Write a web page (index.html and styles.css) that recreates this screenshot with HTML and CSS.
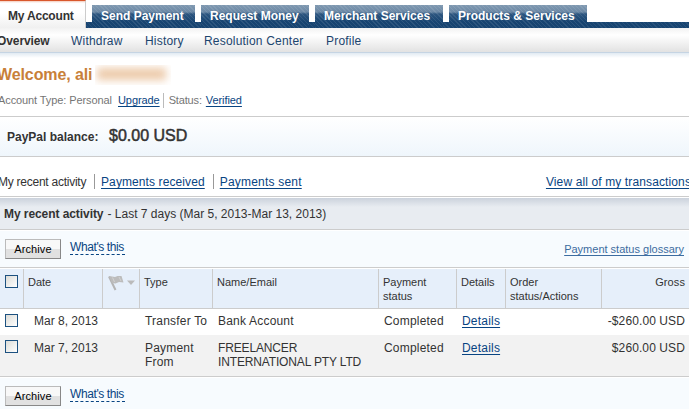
FILE: index.html
```html
<!DOCTYPE html>
<html lang="en">
<head>
    <meta charset="UTF-8">
    <title>My Account - PayPal</title>
    <link rel="stylesheet" href="styles.css">
</head>
<body>
    <div class="tabs">
        <a class="tab active">My Account</a>
        <a class="tab send">Send Payment</a>
        <a class="tab request">Request Money</a>
        <a class="tab merchant">Merchant Services</a>
        <a class="tab products">Products &amp; Services</a>
    </div>
    <div class="subnav">
        <a class="current">Overview</a>
        <a class="withdraw">Withdraw</a>
        <a class="history">History</a>
        <a class="resolution">Resolution Center</a>
        <a class="profile">Profile</a>
    </div>

    <div class="welcome">
        <h1>Welcome, ali</h1>
        <span class="surname"><i></i></span>
    </div>
    <div class="account">
        <span class="type">Account Type: Personal</span>
        <a href="#">Upgrade</a>
        <span class="status">Status:</span>
        <a href="#">Verified</a>
    </div>

    <div class="balance">
        <b class="label">PayPal balance:</b>
        <b class="amount">$0.00 USD</b>
    </div>

    <div class="filters">
        <span class="selected">My recent activity</span>
        <span class="filter"><a href="#">Payments received</a></span>
        <span class="filter sent"><a href="#">Payments sent</a></span>
        <a class="all" href="#">View all of my transactions</a>
    </div>

    <div class="heading"><b>My recent activity</b><span>- Last 7 days (Mar 5, 2013-Mar 13, 2013)</span></div>

    <div class="actions">
        <button type="button">Archive</button>
        <a class="hint">What's this</a>
        <a class="glossary" href="#">Payment status glossary</a>
    </div>

    <table class="activity">
        <colgroup>
            <col class="c-check"><col class="c-date"><col class="c-flag"><col class="c-type"><col class="c-name"><col class="c-status"><col class="c-details"><col class="c-order"><col class="c-gross">
        </colgroup>
        <thead>
            <tr>
                <th class="check"><span class="box"></span></th>
                <th>Date</th>
                <th class="flag">
                    <svg width="29" height="17" viewBox="0 0 29 17">
                        <path d="M2 2.500 L8.500 16" stroke="#b4b4b4" stroke-width="2" fill="none"/>
                        <path d="M2 2 L8 3 L10.500 2 L14.500 2 L16.500 8.500 L12 8 L8.500 9.500 L5 9 Z" fill="#bcbcbc"/>
                        <path d="M5.500 3.500 L7.500 8 M12 3 L14 7" stroke="#d2d2d2" fill="none"/>
                        <path d="M20 6.500 H28 L24 11 Z" fill="#bbb"/>
                    </svg>
                </th>
                <th>Type</th>
                <th>Name/Email</th>
                <th>Payment<br>status</th>
                <th>Details</th>
                <th>Order<br>status/Actions</th>
                <th class="gross">Gross</th>
            </tr>
        </thead>
        <tbody>
            <tr class="first">
                <td class="check"><span class="box"></span></td>
                <td class="date">Mar 8, 2013</td>
                <td></td>
                <td>Transfer To</td>
                <td>Bank Account</td>
                <td>Completed</td>
                <td><a href="#">Details</a></td>
                <td></td>
                <td class="gross">-$260.00 USD</td>
            </tr>
            <tr class="alt">
                <td class="check"><span class="box"></span></td>
                <td class="date">Mar 7, 2013</td>
                <td></td>
                <td>Payment<br>From</td>
                <td class="caps">FREELANCER<br>INTERNATIONAL PTY LTD</td>
                <td>Completed</td>
                <td><a href="#">Details</a></td>
                <td></td>
                <td class="gross">$260.00 USD</td>
            </tr>
        </tbody>
    </table>

    <div class="actions bottom">
        <button type="button">Archive</button>
        <a class="hint">What's this</a>
    </div>
</body>
</html>
```
FILE: styles.css
```css
* {
    box-sizing: border-box;
}
body {
    margin: 0;
    width: 689px;
    height: 409px;
    overflow: hidden;
    background: #fff;
    color: #333;
    font: 12px/14px "Liberation Sans", Arial, sans-serif;
    white-space: nowrap;
}
a {
    color: #084482;
    text-underline-offset: 2px;
}

/* main tabs */
.tabs {
    display: flex;
    align-items: flex-start;
    gap: 6px;
    height: 28px;
    background:
        repeating-linear-gradient(45deg, rgba(255,255,255,0.07) 0 1px, transparent 1px 3px) 0 22px no-repeat,
        linear-gradient(#174471, #174471) 0 22px no-repeat;
}
.tab {
    margin-top: 5px;
    height: 23px;
    padding: 4px 0 0 9px;
    color: #fff;
    font-weight: bold;
    letter-spacing: 0;
    background:
        repeating-linear-gradient(45deg, rgba(255,255,255,0.09) 0 1px, transparent 1px 3px),
        linear-gradient(#8099b1 0, #6b88a5 7px, #2d5680 9px, #174471 17px);
}
.tab.active {
    width: 86px;
    height: 28px;
    margin: 0;
    padding: 8px 0 0 8px;
    color: #333;
    border-top: 1px solid #d9572b;
    border-right: 1px solid #ccc;
    background: linear-gradient(#f3c9b9 0, #fff 2px, #fff 12px, #f0f0f0);
    letter-spacing: -0.2px;
}
.send { width: 103px; }
.request { width: 108px; }
.merchant { width: 128px; }
.products { width: 138px; }

.subnav {
    display: flex;
    height: 30px;
    padding-top: 6px;
    letter-spacing: 0.2px;
    background: linear-gradient(#f2f2f2 0, #fff 7px, #e2e2e2 24px, #c5d4e3 24px, #c5d4e3 25px, #e1eaf2 25px, #fff 30px);
}
.subnav a {
    color: #1c456e;
}
.subnav .current {
    width: 74px;
    margin-left: -3px;
    color: #333;
    font-weight: bold;
    letter-spacing: -0.1px;
}
.withdraw { width: 74px; }
.history { width: 59px; }
.resolution { width: 122px; }

.welcome {
    display: flex;
    height: 36px;
    padding-top: 7px;
}
.welcome h1 {
    width: 98px;
    margin: 0 0 0 -3px;
    color: #c88039;
    font-size: 16px;
    line-height: 19px;
    letter-spacing: -0.1px;
}
.surname {
    width: 76px;
    height: 20px;
    padding: 3px 5px 0 2px;
    overflow: hidden;
}
.surname i {
    display: block;
    height: 12px;
    background: #ecc9a8;
    filter: blur(4px);
}

.account {
    display: flex;
    height: 22px;
    color: #757575;
    font-size: 11px;
    line-height: 13px;
}
.account a {
    letter-spacing: -0.08px;
}
.account .type {
    width: 120px;
    margin-left: -2px;
    letter-spacing: -0.1px;
}
.account .status {
    margin: -1px 4px 0 3px;
    padding: 1px 0 0 5px;
    height: 15px;
    border-left: 1px solid #bbb;
    letter-spacing: -0.15px;
}

.balance {
    display: flex;
    height: 41px;
    padding: 13px 0 0 7px;
    border-top: 1px solid #ccc;
    border-bottom: 1px solid #ccc;
    background: linear-gradient(#fff, #eff6fc);
}
.balance .label {
    width: 102px;
}
.balance .amount {
    margin-top: -2px;
    font-size: 16px;
    line-height: 16px;
    font-weight: normal;
    -webkit-text-stroke: 0.5px #333;
}

.filters {
    display: flex;
    height: 40px;
    padding-top: 17px;
    border-bottom: 1px solid #ccc;
}
.selected {
    width: 96px;
    margin-left: -2px;
    padding-top: 1px;
    letter-spacing: -0.25px;
}
.filter {
    height: 15px;
    padding: 1px 8px 0 6px;
    border-left: 1px solid #999;
    letter-spacing: 0.1px;
}
.sent {
    letter-spacing: 0.2px;
}
.filters .all {
    margin: 1px -2px 0 auto;
    letter-spacing: 0.12px;
}
.heading {
    height: 32px;
    margin-top: 1px;
    padding: 9px 0 0 4px;
    border-bottom: 1px solid #ccc;
    background: linear-gradient(#cbd2dc, #e8ecf1 9px);
}
.heading b {
    letter-spacing: -0.07px;
}
.heading span {
    margin-left: 4px;
}

/* archive bars */
.actions {
    display: flex;
    height: 38px;
    padding: 8px 2px 0 5px;
    border-top: 1px solid #fff;
    border-bottom: 1px solid #ccc;
    background: #f7fbfe;
    font-size: 11px;
}
.actions button {
    width: 56px;
    height: 20px;
    padding: 0;
    border: 1px solid #888;
    border-top-color: #bbb;
    border-left-color: #bbb;
    background: linear-gradient(#f8f8f8 50%, #e1e1e1 50%);
    font: 11px "Liberation Sans", Arial, sans-serif;
    letter-spacing: 0.1px;
    color: #000;
}
.hint {
    width: 55px;
    height: 16px;
    margin: 0 0 0 9px;
    padding-top: 1px;
    border-bottom: 1px dashed #084482;
    font-size: 12px;
    letter-spacing: -0.4px;
}
.glossary {
    margin: 3px 3px 0 auto;
    color: #3c6ca0;
}
.bottom {
    height: 33px;
    border-bottom: 0;
}

.activity {
    width: 689px;
    table-layout: fixed;
    border-collapse: separate;
    border-spacing: 0;
    border-top: 1px solid #fff;
}
.c-check { width: 24px; }
.c-date { width: 79px; }
.c-flag { width: 37px; }
.c-type { width: 73px; }
.c-name { width: 166px; }
.c-status { width: 78px; }
.c-details { width: 49px; }
.c-order { width: 96px; }
.c-gross { width: 87px; }
.activity th {
    height: 40px;
    padding: 6px 0 0 4px;
    border-right: 1px solid #ccc;
    border-bottom: 1px solid #ccc;
    background: #e6effa;
    font-size: 11px;
    font-weight: normal;
    text-align: left;
    vertical-align: top;
}
.activity td {
    height: 26px;
    padding: 5px 0 0 5px;
    vertical-align: top;
    letter-spacing: 0.2px;
}
.activity .alt td {
    height: 42px;
    padding-top: 6px;
    background: #f2f2f2;
    border-bottom: 1px solid #ccc;
}
.activity .date {
    padding-left: 10px;
    letter-spacing: 0;
}
.activity .caps {
    letter-spacing: -0.15px;
}
.activity th.gross, .activity td.gross {
    padding-right: 4px;
    border-right: 0;
    text-align: right;
}
.activity .gross {
    letter-spacing: 0.1px;
}
.activity .flag {
    padding: 5px 0 0 4px;
}
.flag svg {
    display: block;
}
.box {
    display: block;
    width: 13px;
    height: 13px;
    border: 1px solid #1c5180;
    background: linear-gradient(135deg, #dcdcd7, #fff);
}
.activity th.check {
    padding: 6px 0 0 5px;
}
.activity .alt .check {
    padding-top: 5px;
}
```
